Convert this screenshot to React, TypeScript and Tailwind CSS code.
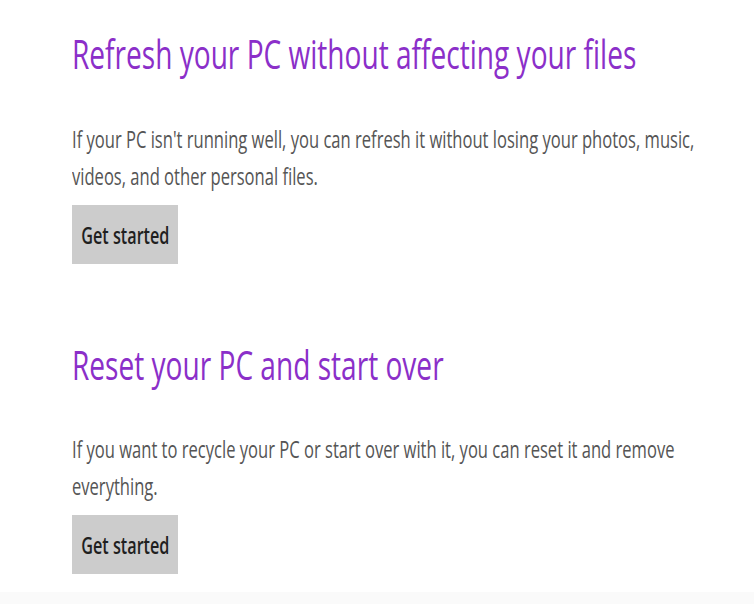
const title = "text-[40px] leading-[48px] font-normal text-[#8b2fc9] whitespace-nowrap inline-block origin-left scale-x-[0.702]";
const body = "text-[24px] leading-[37px] text-[#555555] whitespace-nowrap inline-block origin-left scale-x-[0.69]";

function StartButton() {
  return (
    <button className="w-[106px] h-[59px] bg-[#cccccc] flex items-center justify-center overflow-hidden">
      <span className="text-[24px] font-semibold text-[#1f1f1f] whitespace-nowrap inline-block scale-x-[0.675]">
        Get started
      </span>
    </button>
  );
}

export default function App() {
  return (
    <div className="h-screen bg-white flex flex-col overflow-hidden" style={{ fontFamily: '"Open Sans", "Liberation Sans", sans-serif' }}>
      <main className="flex-1 pl-[72px] pt-[30px] overflow-hidden">
        {/* Refresh */}
        <section>
          <h1 className={title}>Refresh your PC without affecting your files</h1>
          <p className="mt-[42px]">
            <span className={body}>
              If your PC isn't running well, you can refresh it without losing your photos, music,
            </span>
            <br />
            <span className={body}>videos, and other personal files.</span>
          </p>
          <div className="mt-[11px]">
            <StartButton />
          </div>
        </section>

        {/* Reset */}
        <section className="mt-[77px]">
          <h1 className={title}>Reset your PC and start over</h1>
          <p className="mt-[41px]">
            <span className={body}>
              If you want to recycle your PC or start over with it, you can reset it and remove
            </span>
            <br />
            <span className={body}>everything.</span>
          </p>
          <div className="mt-[11px]">
            <StartButton />
          </div>
        </section>
      </main>
      <div className="h-[12px] bg-[#fafafa]" />
    </div>
  );
}
